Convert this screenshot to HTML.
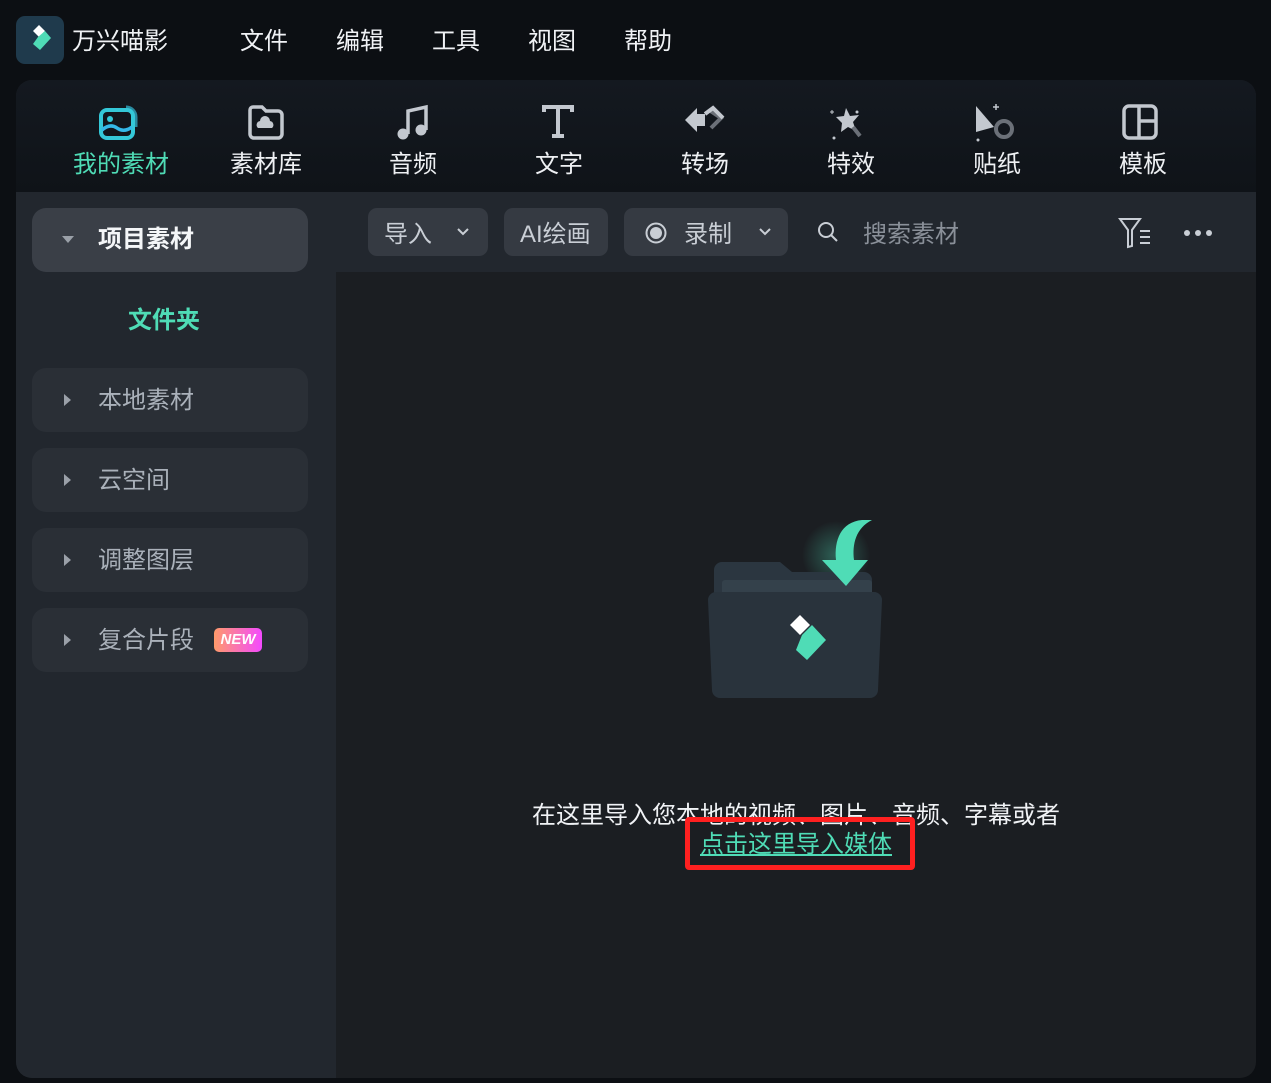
<!DOCTYPE html>
<html><head><meta charset="utf-8"><style>
*{margin:0;padding:0;box-sizing:border-box}
body{width:1271px;height:1083px;background:#0c0f13;position:relative;overflow:hidden;font-family:"Liberation Sans","Noto Sans CJK SC",sans-serif;color:#e8ebef}
.a{position:absolute}
.menu{top:21px;font-size:24px;color:#f0f2f5}
.panel{left:16px;top:80px;width:1240px;height:998px;border-radius:16px;overflow:hidden;background:#1b1e22}
.tb{left:0;top:0;width:1240px;height:112px;background:linear-gradient(#141920,#0f1318)}
.ti{top:64px;width:100px;text-align:center;font-size:24px;color:#eef0f3}
.ic{top:22px}
.side{left:0;top:112px;width:320px;height:886px;background:#22272e}
.item{left:16px;width:276px;height:64px;border-radius:14px;background:#2a2f36;font-size:24px;color:#aab1ba}
.item .tri{position:absolute;left:32px;top:26px;width:0;height:0;border-left:7px solid #9aa0a8;border-top:6px solid transparent;border-bottom:6px solid transparent}
.item span{position:absolute;left:66px;top:12px}
.ctb{left:320px;top:112px;width:920px;height:80px;background:#22272e}
.btn{top:16px;height:48px;border-radius:9px;background:#353a42;font-size:24px;color:#c9ced5}
</style></head><body>
<div class="a" style="left:16px;top:16px;width:48px;height:48px;border-radius:9px;background:#1f3a4c">
<svg width="48" height="48"><path d="M17 15 L23 9 L29 15 L23 21Z" fill="#fff"/><path d="M22 21 L29 15 L35 22 L24 34 L17 28Z" fill="#4fdcb6"/></svg></div>
<div class="a menu" style="left:72px">万兴喵影</div>
<div class="a menu" style="left:240px">文件</div>
<div class="a menu" style="left:336px">编辑</div>
<div class="a menu" style="left:432px">工具</div>
<div class="a menu" style="left:528px">视图</div>
<div class="a menu" style="left:624px">帮助</div>
<div class="a panel">
 <div class="a tb">
  <svg class="a ic" style="left:82px" width="44" height="40"><path d="M28 5 a10 10 0 0 1 10 10 v10" stroke="#2a8aa0" stroke-width="3" fill="none"/><rect x="3" y="8" width="32" height="28" rx="6" fill="none" stroke="#34c8d8" stroke-width="4"/><circle cx="12" cy="17" r="3" fill="#34c8d8"/><path d="M4 28 q8-7 15-2 t15-1" stroke="#34b8e8" stroke-width="3.5" fill="none"/></svg>
  <div class="a ti" style="left:55px;color:#4fdcb6">我的素材</div>
  <svg class="a ic" style="left:230px" width="40" height="40"><path d="M4 8 a3 3 0 0 1 3-3 h9 l4 4 h12 a4 4 0 0 1 4 4 v19 a4 4 0 0 1-4 4 h-24 a4 4 0 0 1-4-4z" fill="none" stroke="#c3c8cf" stroke-width="3.5"/><path d="M12 26 a4 4 0 0 1 2-7 a5 5 0 0 1 10 0 a4 4 0 0 1 2 7z" fill="#c3c8cf"/></svg>
  <div class="a ti" style="left:200px">素材库</div>
  <svg class="a ic" style="left:377px" width="40" height="40"><path d="M15 32 V9 L33 5 V28" stroke="#c3c8cf" stroke-width="3.5" fill="none"/><circle cx="10" cy="32" r="5.5" fill="#c3c8cf"/><circle cx="28" cy="28" r="5.5" fill="#c3c8cf"/></svg>
  <div class="a ti" style="left:347px">音频</div>
  <svg class="a ic" style="left:522px" width="40" height="40"><path d="M6 10 V5 H34 V10 M20 5 V34 M14 34 H26" stroke="#c3c8cf" stroke-width="4" fill="none"/></svg>
  <div class="a ti" style="left:493px">文字</div>
  <svg class="a ic" style="left:667px" width="46" height="40"><path d="M14 6 L2 18 L14 30 V24 H22 V12 H14Z" fill="#c3c8cf"/><path d="M26 8 L38 16 L28 26" stroke="#6b7078" stroke-width="4" fill="none"/><path d="M22 12 L30 6 L40 16" stroke="#c3c8cf" stroke-width="4" fill="none"/></svg>
  <div class="a ti" style="left:639px">转场</div>
  <svg class="a ic" style="left:810px" width="46" height="40"><path d="M20 6 L24 14 L33 13 L27 20 L30 29 L22 25 L15 30 L16 21 L10 15 L18 14Z" fill="#c3c8cf"/><path d="M27 25 L34 34" stroke="#6b7078" stroke-width="4"/><circle cx="31" cy="10" r="1.5" fill="#c3c8cf"/><circle cx="8" cy="36" r="1.5" fill="#c3c8cf"/><path d="M4 10 h4 M6 8 v4" stroke="#c3c8cf"/></svg>
  <div class="a ti" style="left:785px">特效</div>
  <svg class="a ic" style="left:956px" width="50" height="44"><path d="M4 4 L4 30 L22 25Z" fill="#c3c8cf"/><circle cx="32" cy="27" r="8" fill="none" stroke="#6b7078" stroke-width="4"/><path d="M24 2 v6 M21 5 h6" stroke="#c3c8cf" stroke-width="1.5"/><circle cx="6" cy="38" r="1.5" fill="#c3c8cf"/></svg>
  <div class="a ti" style="left:931px">贴纸</div>
  <svg class="a ic" style="left:1104px" width="40" height="40"><rect x="4" y="4" width="32" height="32" rx="5" fill="none" stroke="#c3c8cf" stroke-width="3.5"/><path d="M19 4 V36 M19 19 H36" stroke="#c3c8cf" stroke-width="3.5"/></svg>
  <div class="a ti" style="left:1077px">模板</div>
 </div>
 <div class="a side">
  <div class="a item" style="top:16px;background:#3a3f47"><div class="tri" style="border:none;border-top:7px solid #9aa0a8;border-left:6px solid transparent;border-right:6px solid transparent;top:28px;left:30px"></div><span style="font-weight:bold;color:#f4f6f8;top:11px">项目素材</span></div>
  <div class="a" style="left:112px;top:108px;font-size:24px;font-weight:bold;color:#4fdcb6">文件夹</div>
  <div class="a item" style="top:176px"><div class="tri"></div><span>本地素材</span></div>
  <div class="a item" style="top:256px"><div class="tri"></div><span>云空间</span></div>
  <div class="a item" style="top:336px"><div class="tri"></div><span>调整图层</span></div>
  <div class="a item" style="top:416px"><div class="tri"></div><span>复合片段</span><div class="a" style="left:182px;top:20px;width:48px;height:24px;border-radius:5px;background:linear-gradient(90deg,#ff9a6a,#f44aff);color:#fff;font-size:15px;font-style:italic;font-weight:bold;text-align:center;line-height:24px">NEW</div></div>
  <svg class="a" style="left:22px;top:910px" width="34" height="32"><path d="M3 22 V5 a2 2 0 0 1 2-2 h8 l3 3 h11 a2 2 0 0 1 2 2 v6 M3 22 a2 2 0 0 0 2 2 h13" fill="none" stroke="#c3c8cf" stroke-width="2"/><path d="M24 18 v10 M19 23 h10" stroke="#c3c8cf" stroke-width="2.2"/></svg>
  <svg class="a" style="left:86px;top:910px" width="34" height="32"><path d="M3 22 V5 a2 2 0 0 1 2-2 h8 l3 3 h11 a2 2 0 0 1 2 2 v6 M3 22 a2 2 0 0 0 2 2 h13" fill="none" stroke="#5b6068" stroke-width="2"/><path d="M21 20 l7 7 M28 20 l-7 7" stroke="#5b6068" stroke-width="2.2"/></svg>
  <div class="a" style="left:258px;top:908px;width:36px;height:36px;border-radius:6px;background:#30353c"><svg width="36" height="36"><path d="M21 11 L15 18 L21 25" stroke="#4fdcb6" stroke-width="2.4" fill="none"/></svg></div>
 </div>
 <div class="a ctb">
  <div class="a btn" style="left:32px;width:120px"><span class="a" style="left:16px;top:6px">导入</span><svg class="a" style="left:88px;top:19px" width="14" height="10"><path d="M2 2 L7 7 L12 2" stroke="#c9ced5" stroke-width="2" fill="none"/></svg></div>
  <div class="a btn" style="left:168px;width:104px"><span class="a" style="left:16px;top:6px">AI绘画</span></div>
  <div class="a btn" style="left:288px;width:164px"><svg class="a" style="left:20px;top:13px" width="24" height="24"><circle cx="12" cy="12" r="9.5" fill="none" stroke="#c9ced5" stroke-width="2"/><circle cx="12" cy="12" r="6" fill="#c9ced5"/></svg><span class="a" style="left:60px;top:6px">录制</span><svg class="a" style="left:134px;top:19px" width="14" height="10"><path d="M2 2 L7 7 L12 2" stroke="#c9ced5" stroke-width="2" fill="none"/></svg></div>
  <svg class="a" style="left:480px;top:28px" width="24" height="24"><circle cx="10" cy="10" r="7" fill="none" stroke="#c9ced5" stroke-width="2"/><path d="M15 15 L21 21" stroke="#c9ced5" stroke-width="2"/></svg>
  <div class="a" style="left:527px;top:22px;font-size:24px;color:#8a9099">搜索素材</div>
  <svg class="a" style="left:782px;top:24px" width="40" height="34"><path d="M2 3 H22 L14 14 V30 L10 31 V14Z" fill="none" stroke="#c9ced5" stroke-width="2"/><path d="M22 15 h10 M22 21 h10 M22 27 h10" stroke="#c9ced5" stroke-width="2"/></svg>
  <div class="a" style="left:848px;top:38px;width:6px;height:6px;border-radius:3px;background:#c9ced5;box-shadow:11px 0 #c9ced5,22px 0 #c9ced5"></div>
 </div>
 <svg class="a" style="left:680px;top:430px" width="200" height="240">
  <defs><radialGradient id="g" cx="0.5" cy="0.5" r="0.5"><stop offset="0" stop-color="#4fdcb6" stop-opacity=".35"/><stop offset="1" stop-color="#4fdcb6" stop-opacity="0"/></radialGradient></defs>
  <circle cx="140" cy="45" r="34" fill="url(#g)"/>
  <path d="M18 60 a8 8 0 0 1 8-8 h58 l12 10 h72 a8 8 0 0 1 8 8 v80 h-158z" fill="#2b3640"/>
  <rect x="26" y="70" width="150" height="20" rx="3" fill="#34414b"/>
  <path d="M12 90 a8 8 0 0 1 8-8 h158 a8 8 0 0 1 8 8 l-4 90 a8 8 0 0 1-8 8 h-150 a8 8 0 0 1-8-8z" fill="#29333c"/>
  <path d="M94 115 L104 105 L114 115 L104 125Z" fill="#fff"/>
  <path d="M106 125 L116 115 L130 130 L111 150 L100 140Z" fill="#4fdcb6"/>
  <path d="M166 10 C145 12 138 30 140 50 L126 50 L150 76 L172 50 L158 50 C156 34 160 18 176 10Z" fill="#4fdcb6"/>
 </svg>
 <div class="a" style="left:320px;top:715px;width:920px;text-align:center;font-size:24px;color:#f0f2f5">在这里导入您本地的视频、图片、音频、字幕或者</div>
 <div class="a" style="left:320px;top:744px;width:920px;text-align:center;font-size:24px;color:#4fdcb6;text-decoration:underline">点击这里导入媒体</div>
 <div class="a" style="left:669px;top:737px;width:230px;height:53px;border:5px solid #ff2020;border-radius:4px"></div>
</div>
</body></html>
